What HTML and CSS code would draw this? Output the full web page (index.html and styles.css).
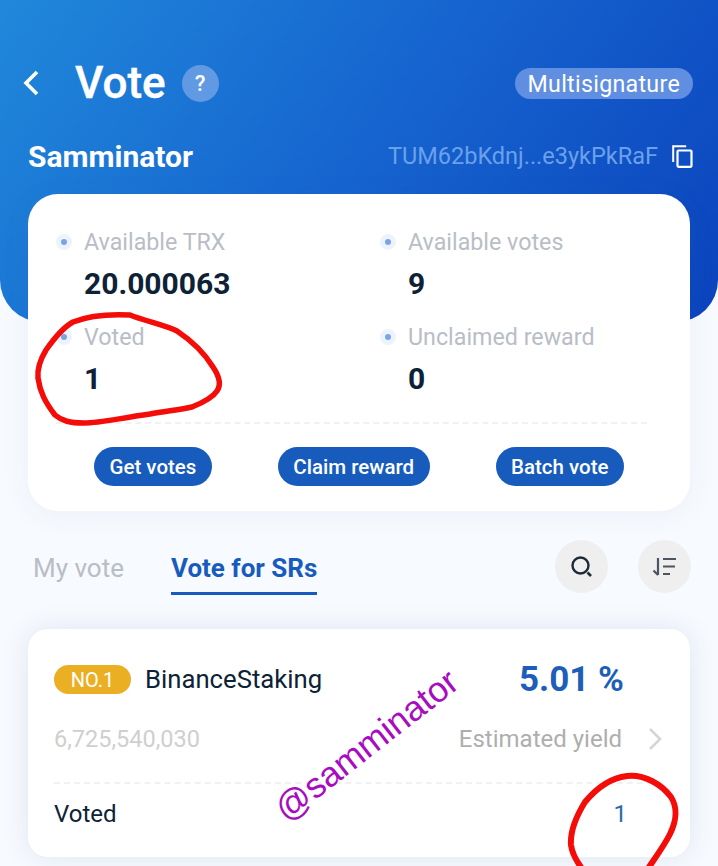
FILE: index.html
```html
<!DOCTYPE html>
<html lang="en">
<head>
    <meta charset="UTF-8">
    <meta name="viewport" content="width=device-width, initial-scale=1.0">
    <title>Vote</title>
    <link rel="stylesheet" href="styles.css">
</head>
<body>

<div class="page">
    <header class="hero">
        <div class="title-row">
            <svg class="back" width="16" height="26" viewBox="0 0 16 26"><path d="M14 2 3 13l11 11" fill="none" stroke="#fff" stroke-width="3.6"/></svg>
            <h1>Vote</h1>
            <span class="help">?</span>
            <span class="pill">Multisignature</span>
        </div>
        <div class="account-row">
            <span class="account-name">Samminator</span>
            <span class="address">TUM62bKdnj...e3ykPkRaF</span>
            <svg class="copy" width="21" height="23" viewBox="0 0 21 23"><path d="M1.2 17V1.2h13" fill="none" stroke="#fff" stroke-width="2"/><rect x="5.500" y="5.500" width="14" height="16.300" rx="1" fill="none" stroke="#fff" stroke-width="2.200"/></svg>
        </div>
    </header>

    <section class="summary">
        <div class="stats">
            <div class="stat">
                <div class="stat-label"><i class="dot"></i>Available TRX</div>
                <div class="stat-value">20.000063</div>
            </div>
            <div class="stat">
                <div class="stat-label"><i class="dot"></i>Available votes</div>
                <div class="stat-value">9</div>
            </div>
            <div class="stat">
                <div class="stat-label"><i class="dot"></i>Voted</div>
                <div class="stat-value">1</div>
            </div>
            <div class="stat">
                <div class="stat-label"><i class="dot"></i>Unclaimed reward</div>
                <div class="stat-value">0</div>
            </div>
        </div>
        <div class="actions">
            <a class="btn" href="#">Get votes</a>
            <a class="btn" href="#">Claim reward</a>
            <a class="btn" href="#">Batch vote</a>
        </div>
    </section>

    <nav class="tabs">
        <a class="tab" href="#">My vote</a>
        <a class="tab active" href="#">Vote for SRs</a>
        <span class="round-btn first">
            <svg width="24" height="24" viewBox="0 0 24 24"><circle cx="10.500" cy="10.500" r="8" fill="none" stroke="#1d2b38" stroke-width="2.400"/><path d="m17.500 17.500 3.500 3.500" stroke="#1d2b38" stroke-width="2.600"/></svg>
        </span>
        <span class="round-btn">
            <svg width="26" height="22" viewBox="0 0 26 22"><path d="M6 2v17M1.500 14.500 6 19" fill="none" stroke="#4c5560" stroke-width="2.200"/><path d="M11 3h13M11 10.500h12M11 18h7" stroke="#4c5560" stroke-width="2.200"/></svg>
        </span>
    </nav>

    <article class="sr-card">
        <div class="sr-top">
            <span class="rank">NO.1</span>
            <span class="sr-name">BinanceStaking</span>
            <span class="sr-yield">5.01 %</span>
        </div>
        <div class="sr-mid">
            <span class="sr-votes">6,725,540,030</span>
            <span class="sr-yield-label">Estimated yield</span>
            <svg class="sr-arrow" width="15" height="24" viewBox="0 0 15 24"><path d="m2 2 10 10L2 22" fill="none" stroke="#d6d6d6" stroke-width="2.600"/></svg>
        </div>
        <div class="sr-bottom">
            <span>Voted</span>
            <span class="sr-voted">1</span>
        </div>
    </article>

    <!-- marks drawn over the screenshot -->
    <svg class="scribble" width="718" height="866" viewBox="0 0 718 866">
        <path d="M130 315C110 314 88 316 73 322 62 328 53 340 46 350 40 360 37 368 38 378 40 392 45 402 55 415 62 421 70 423 84 423 100 423 115 419 150 414 165 411 180 410 192 407 202 403 213 397 217 391 222 384 219 376 213 367 205 354 192 341 177 331 165 325 145 321 130 315Z" fill="none" stroke="#f40c08" stroke-width="5.500"/>
        <path d="M627 776C610 778 595 790 585 802 577 815 570 832 571 845 572 854 577 862 583 870M627 776C645 774 662 785 671 797 678 808 676 822 670 834 664 846 655 858 647 870" fill="none" stroke="#f40c08" stroke-width="6"/>
    </svg>
    <span class="watermark">@samminator</span>
</div>

</body>
</html>
```

FILE: styles.css
```css
* {
    box-sizing: border-box;
}
body {
    margin: 0;
    padding: 0;
    font-family: Roboto, "Liberation Sans", sans-serif;
    background-color: #f7fafe;
}
a {
    text-decoration: none;
}
.page {
    position: relative;
    width: 718px;
    height: 866px;
    overflow: hidden;
}

/* top blue area */
.hero {
    height: 322px;
    padding: 60px 25px 0 23px;
    background: linear-gradient(125deg, #2088da 0%, #1664cf 50%, #0b43bd 100%);
    border-radius: 0 0 42px 42px;
    color: #fff;
}
.title-row {
    display: flex;
    align-items: center;
    height: 46px;
}
.back {
    margin-right: 36px;
}
.title-row h1 {
    margin: 0 16px 0 0;
    font-size: 44px;
    font-weight: 500;
    -webkit-text-stroke: 0.4px #fff;
}
.help {
    width: 37px;
    height: 37px;
    border-radius: 50%;
    background-color: #6199e2;
    font-size: 22px;
    font-weight: 500;
    line-height: 37px;
    text-align: center;
}
.pill {
    margin-left: auto;
    padding: 0 13px;
    height: 31px;
    border-radius: 16px;
    background-color: #608ee0;
    font-size: 23.200px;
    line-height: 32px;
    letter-spacing: 0.3px;
}
.account-row {
    display: flex;
    align-items: center;
    height: 40px;
    margin-top: 30px;
    padding-left: 5px;
}
.account-name {
    font-size: 30px;
    font-weight: 700;
}
.address {
    margin-left: auto;
    color: #6ba1ea;
    font-size: 23.500px;
}
.copy {
    margin-left: 14px;
}

/* white summary card */
.summary {
    position: relative;
    height: 317px;
    margin: -128px 28px 0;
    padding: 26px 28px 0;
    background-color: #fff;
    border-radius: 30px;
    box-shadow: 0 4px 30px rgba(60, 100, 170, 0.06);
}
.stats {
    display: grid;
    grid-template-columns: 324px 1fr;
    grid-auto-rows: 95px;
    height: 204px;
    margin-right: 15px;
    border-bottom: 2px dashed #f0f1f3;
}
.stat-label {
    display: flex;
    align-items: center;
    height: 44px;
    color: #b9bdc5;
    font-size: 23.250px;
}
.stat-value {
    padding: 2px 0 0 28px;
    color: #0d2236;
    font-size: 30px;
    font-weight: 700;
    line-height: 36px;
}
.dot {
    width: 16px;
    height: 16px;
    margin-right: 12px;
    border: 5px solid #edf3fc;
    border-radius: 50%;
    background-color: #7aa5e4;
}
.actions {
    display: flex;
    justify-content: space-between;
    margin: 23px 38px 0;
}
.btn {
    height: 39px;
    padding: 0 15.500px;
    border-radius: 20px;
    background-color: #175cbd;
    color: #fff;
    font-size: 20.500px;
    font-weight: 500;
    line-height: 41px;
}

/* tabs */
.tabs {
    display: flex;
    align-items: flex-start;
    height: 118px;
    padding: 29px 27px 0 33px;
}
.tab {
    height: 55px;
    margin-right: 47px;
    color: #b9bdc5;
    font-size: 26px;
    line-height: 57px;
}
.tab.active {
    border-bottom: 3px solid #175cbd;
    color: #175cbd;
    font-weight: 700;
}
.round-btn {
    display: flex;
    align-items: center;
    justify-content: center;
    width: 53px;
    height: 53px;
    margin-left: 30px;
    border-radius: 50%;
    background-color: #efefef;
}
.round-btn.first {
    margin-left: auto;
}

/* SR card */
.sr-card {
    height: 228px;
    margin: 0 28px;
    padding: 14px 27px 0 26px;
    background-color: #fff;
    border-radius: 20px;
    box-shadow: 0 0 26px rgba(60, 90, 160, 0.13);
}
.sr-top {
    display: flex;
    align-items: center;
    height: 72px;
}
.rank {
    width: 77px;
    height: 29px;
    margin-right: 14px;
    border-radius: 15px;
    background-color: #ebaf24;
    color: #fff;
    font-size: 20px;
    line-height: 30px;
    text-align: center;
}
.sr-name {
    color: #0d2236;
    font-size: 25.700px;
}
.sr-yield {
    margin-left: auto;
    margin-right: 39px;
    color: #1d5fb8;
    font-size: 35px;
    font-weight: 700;
}
.sr-mid {
    display: flex;
    align-items: center;
    height: 69px;
    padding-bottom: 19px;
    border-bottom: 2px dashed #f0f1f3;
    font-size: 24px;
}
.sr-votes {
    color: #cfcfcf;
    font-size: 23.500px;
}
.sr-yield-label {
    margin-left: auto;
    color: #aeaeae;
}
.sr-arrow {
    margin-left: 26px;
}
.sr-bottom {
    display: flex;
    justify-content: space-between;
    align-items: center;
    height: 60px;
    padding-right: 36px;
    color: #0d2236;
    font-size: 24px;
}
.sr-voted {
    color: #2a6cae;
}

/* overlays */
.scribble {
    position: absolute;
    top: 0;
    left: 0;
}
.watermark {
    position: absolute;
    top: 725px;
    left: 256px;
    color: #a80cbf;
    font-family: "Liberation Sans", sans-serif;
    font-size: 35.500px;
    transform: rotate(-38deg);
}
```
